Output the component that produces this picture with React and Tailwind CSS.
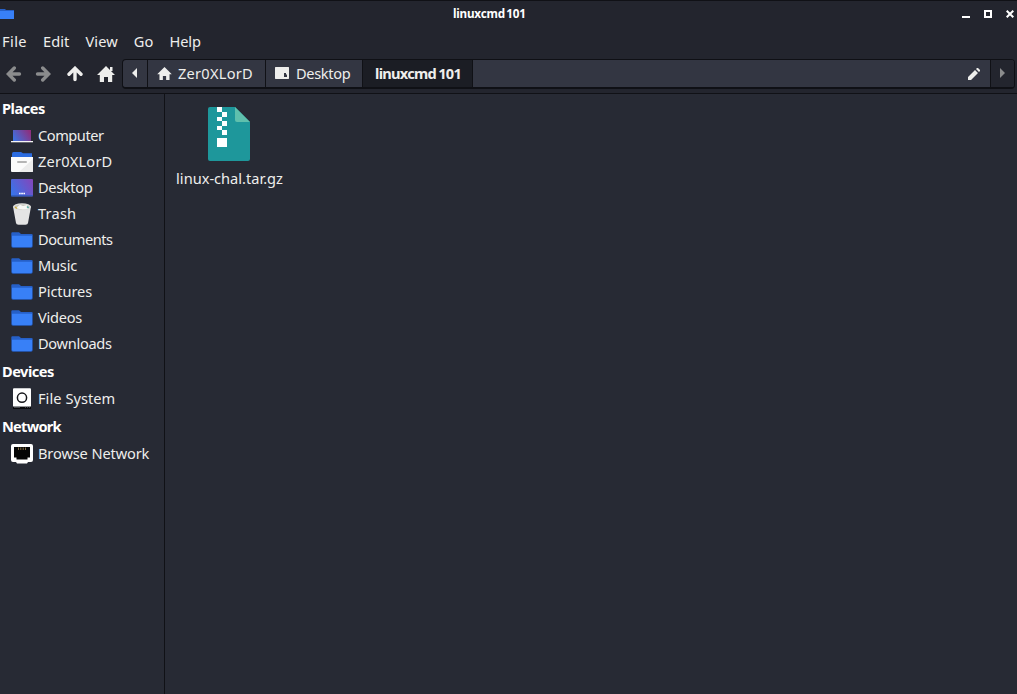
import React from "react";

const FolderIcon = () => (
  <svg className="h-[22px] w-[22px]" viewBox="0 0 22 22">
    <path d="M0.3 4.5Q0.3 3.3 1.3 3.3H8L10 5H20.5Q21.7 5 21.7 6V17Q21.7 18.7 20 18.7H2Q0.3 18.7 0.3 17Z" fill="#2660c8" />
    <path d="M1 6.7H21V17Q21 18 19.5 18H2.5Q1 18 1 17Z" fill="#3880f7" />
  </svg>
);

const ComputerIcon = () => (
  <svg className="h-[22px] w-[22px]" viewBox="0 0 22 22">
    <defs>
      <linearGradient id="screen" x1="0" y1="0.7" x2="1" y2="0.3">
        <stop offset="0" stopColor="#3f70df" />
        <stop offset="1" stopColor="#8d2f7e" />
      </linearGradient>
    </defs>
    <rect x="2" y="5" width="18" height="11" fill="url(#screen)" />
    <rect x="0" y="16" width="22" height="1.3" fill="#f5f5f5" />
  </svg>
);

const HomeFolderIcon = () => (
  <svg className="h-[22px] w-[22px]" viewBox="0 0 22 22">
    <path d="M1 6V3Q1 1 2.5 1H10L12 2.2H21V6Z" fill="#2c6ce0" />
    <path d="M0 6H22V20Q22 21 21 21H1Q0 21 0 20Z" fill="#fbfbfb" />
    <path d="M22 8V20Q22 21 21 21H8Z" fill="#ececec" />
    <rect x="6" y="10" width="10" height="2" rx="1" fill="#b5b5b5" />
  </svg>
);

const DesktopIcon = () => (
  <svg className="h-[22px] w-[22px]" viewBox="0 0 22 22">
    <defs>
      <linearGradient id="desk" x1="0" y1="0.7" x2="1" y2="0.2">
        <stop offset="0" stopColor="#3a73e8" />
        <stop offset="1" stopColor="#8048bd" />
      </linearGradient>
    </defs>
    <rect x="0" y="2" width="22" height="17.5" rx="1" fill="url(#desk)" />
    <path d="M0 18.7H22" stroke="#315bbb" strokeWidth="1" />
    <path d="M8 16.5H9.7M10.2 16.5H11.9M12.4 16.5H14" stroke="#fff" strokeWidth="1.4" />
  </svg>
);

const TrashIcon = () => (
  <svg className="h-[22px] w-[22px]" viewBox="0 0 22 22">
    <path d="M2 3.5L5 20Q5.2 21.8 7.5 21.8H14.5Q16.8 21.8 17 20L20 3.5Z" fill="#e4e4e4" />
    <ellipse cx="11" cy="3.7" rx="9" ry="3.5" fill="#dededb" />
    <ellipse cx="11" cy="4" rx="7.5" ry="2.4" fill="#c6c5bb" />
    <path d="M5 5L9 1.7L12 3L16 2L17.5 5.5Q11 7.5 5 5Z" fill="#f8f8f5" />
    <path d="M4 4L6 5.5" stroke="#d6b33c" strokeWidth="1.3" />
    <path d="M16 3.5L17.5 5" stroke="#4aa9a0" strokeWidth="1.2" />
  </svg>
);

const DriveIcon = () => (
  <svg className="h-[22px] w-[22px]" viewBox="0 0 22 22">
    <rect x="2" y="0.3" width="18" height="18.5" rx="1" fill="#fff" />
    <circle cx="11" cy="9.7" r="4.6" fill="none" stroke="#15161a" strokeWidth="1.5" />
    <rect x="2" y="18.8" width="18" height="2.2" rx=".6" fill="#090a0d" />
    <path d="M3 19.3H9M14 19.3H15M16 19.3H17M18 19.3H19" stroke="#777b82" strokeWidth=".7" />
  </svg>
);

const EthernetIcon = () => (
  <svg className="h-[22px] w-[22px]" viewBox="0 0 22 22">
    <path d="M2 1H20Q22 1 22 3V17Q22 19 20 19H17L16 20.5H6L5 19H2Q0 19 0 17V3Q0 1 2 1Z" fill="#fff" />
    <path d="M3 4H19V14.5H16.5V16.5H5.5V14.5H3Z" fill="#050505" />
    <path d="M7.5 4.5V7M9.8 4.5V7M12.2 4.5V7M14.5 4.5V7" stroke="#8e7749" strokeWidth=".9" />
  </svg>
);

const ArrowIcon = ({ className }) => (
  <svg className={className} viewBox="0 0 16 16" fill="none" stroke="currentColor" strokeWidth="3.4" strokeLinecap="round">
    <path d="M8.3 2L2.3 8L8.3 14M3 8H13.5" />
  </svg>
);

const HouseIcon = ({ className, chimney }) => (
  <svg className={className} viewBox="0 0 18 16" fill="currentColor">
    <path d="M9 0L18 9H15.2V16H11V11H7V16H2.8V9H0Z" />
    {chimney && <path d="M13 1H15.5V5H13Z" />}
  </svg>
);

const places = [
  ["Computer", ComputerIcon, "tracking-[-0.45px]"],
  ["Zer0XLorD", HomeFolderIcon, "tracking-[0.2px]"],
  ["Desktop", DesktopIcon, "tracking-[-0.35px]"],
  ["Trash", TrashIcon, "tracking-[0.2px]"],
  ["Documents", FolderIcon, "tracking-[-0.45px]"],
  ["Music", FolderIcon, "tracking-[-0.2px]"],
  ["Pictures", FolderIcon, "tracking-[-0.1px]"],
  ["Videos", FolderIcon, "tracking-[-0.25px]"],
  ["Downloads", FolderIcon, "tracking-[-0.3px]"],
];

const Heading = ({ children, tracking }) => (
  <h2 className={`flex h-[29px] items-center pb-0.5 pl-0.5 text-[14.6px] font-bold text-white ${tracking}`}>{children}</h2>
);

const Item = ({ label, Icon, tracking }) => (
  <li className="flex h-[26px] items-center gap-[5px] pl-[11px]">
    <Icon />
    <span className={`pb-0.5 whitespace-nowrap ${tracking}`}>{label}</span>
  </li>
);

export default function App() {
  return (
    <div className="flex h-[694px] w-[1017px] flex-col overflow-hidden bg-[#272a34] font-['Noto_Sans',sans-serif] text-[14.6px] leading-5 text-[#eeeeec]">
      <header className="flex h-7 shrink-0 items-center border-t border-[#101116] bg-[#23252e] pb-[2px]">
        <div className="w-[453px]">
          <svg className="h-[14px] w-[14px]" viewBox="0 0 14 14">
            <path d="M0 2H5L6 3H14V12H0Z" fill="#2660c8" />
            <path d="M0 4H14V12H0Z" fill="#3880f7" />
          </svg>
        </div>
        <h1 className="pb-px text-[11.7px] font-bold tracking-[-0.2px] whitespace-nowrap text-white [word-spacing:-1.5px]">linuxcmd 101</h1>
        <div className="ml-auto flex items-center gap-[14px] pr-[3px] text-white">
          <svg className="h-2 w-2" viewBox="0 0 8 8"><path d="M0 6H8V8H0Z" fill="currentColor" /></svg>
          <svg className="h-2 w-2" viewBox="0 0 8 8"><path d="M1 1H7V7H1Z" fill="none" stroke="currentColor" strokeWidth="2" /></svg>
          <svg className="h-2 w-2" viewBox="0 0 8 8"><path d="M.7 .7L7.3 7.3M7.3 .7L.7 7.3" stroke="currentColor" strokeWidth="2" /></svg>
        </div>
      </header>

      <nav className="flex h-[26px] shrink-0 items-center gap-4 bg-[#23252e] pl-[2px]">
        <span className="tracking-[0.4px]">File</span>
        <span className="tracking-[0.1px]">Edit</span>
        <span className="tracking-[0.1px]">View</span>
        <span className="tracking-[0.1px]">Go</span>
        <span className="tracking-[-0.1px]">Help</span>
      </nav>

      <div className="flex h-10 shrink-0 items-center border-b border-[#101116] bg-[#23252e] pl-[6px]">
        <ArrowIcon className="mr-[13px] h-4 w-4 text-[#8b8c8d]" />
        <ArrowIcon className="mr-4 h-4 w-4 rotate-180 text-[#8b8c8d]" />
        <ArrowIcon className="mr-[14px] h-4 w-4 rotate-90 text-[#eeeeec]" />
        <HouseIcon chimney className="mr-[7px] h-4 w-[18px] text-[#eeeeec]" />
        <div className="flex h-[30px] w-[893px] overflow-hidden rounded-[4px] border border-b-2 border-[#0f1015] bg-[#333642]">
          <div className="flex w-[25px] items-center justify-center border-r border-[#101116] pr-[2px]">
            <svg className="h-[10px] w-[5px]" viewBox="0 0 5 10"><path d="M5 0V10L0 5Z" fill="currentColor" /></svg>
          </div>
          <div className="flex w-[118px] items-center gap-[6px] border-r border-[#101116] pl-[9px]">
            <HouseIcon className="h-[13px] w-[15px]" />
            <span className="tracking-[0.25px]">Zer0XLorD</span>
          </div>
          <div className="flex w-[97px] items-center gap-[7px] border-r border-[#101116] pl-[9px]">
            <svg className="h-3 w-[14px]" viewBox="0 0 14 12"><path fillRule="evenodd" d="M0.5 0H13.5L14 0.5V11.5L13.5 12H0.5L0 11.5V0.5ZM9 6V10H12V7.5H11V6Z" fill="currentColor" /></svg>
            <span className="tracking-[-0.35px]">Desktop</span>
          </div>
          <div className="flex w-[110px] items-center border-r border-[#101116] bg-[#1b1d24] pl-3 font-bold">
            <span className="tracking-[-0.72px] whitespace-nowrap [word-spacing:-1px]">linuxcmd 101</span>
          </div>
          <div className="flex flex-1 items-center justify-end border-r border-[#101116] pr-[10px]">
            <svg className="relative top-px h-3 w-3" viewBox="0 0 12 12" fill="currentColor"><path d="M0 9L7 2L10 5L3 12H0ZM8 1L9 0H10L12 2V3L11 4Z" /></svg>
          </div>
          <div className="flex w-[23px] items-center justify-center bg-[#23252e] text-[#8b8c8d]">
            <svg className="h-[10px] w-[5px]" viewBox="0 0 5 10"><path d="M0 0V10L5 5Z" fill="currentColor" /></svg>
          </div>
        </div>
      </div>

      <div className="flex min-h-0 flex-1">
        <aside className="w-[165px] shrink-0 border-r border-[#101116]">
          <Heading tracking="tracking-[-0.5px]">Places</Heading>
          <ul>{places.map(([label, Icon, tracking]) => <Item key={label} label={label} Icon={Icon} tracking={tracking} />)}</ul>
          <Heading tracking="tracking-[-0.5px]">Devices</Heading>
          <ul><Item label="File System" Icon={DriveIcon} tracking="tracking-[0.05px]" /></ul>
          <Heading tracking="tracking-[-0.75px]">Network</Heading>
          <ul><Item label="Browse Network" Icon={EthernetIcon} tracking="tracking-[-0.12px]" /></ul>
        </aside>
        <main className="pt-[13px] pl-[11px]">
          <div className="flex w-[107px] flex-col items-center">
            <svg className="mr-[1px] h-[54px] w-[42px]" viewBox="0 0 42 54">
              <path d="M2 0H27L42 15V52Q42 54 40 54H2Q0 54 0 52V2Q0 0 2 0Z" fill="#1e979b" />
              <path d="M27 0L42 15H29Q27 15 27 13Z" fill="#5fc0ad" />
              <path d="M9 0H14V5H9ZM14 5H19V10H14ZM9 10H14V14H9ZM14 14H19V19H14ZM9 19H14V23H9ZM14 23H19V28H14ZM9 31H19V40H9Z" fill="#fff" />
            </svg>
            <span className="mt-[7px] whitespace-nowrap">linux-chal.tar.gz</span>
          </div>
        </main>
      </div>
    </div>
  );
}
